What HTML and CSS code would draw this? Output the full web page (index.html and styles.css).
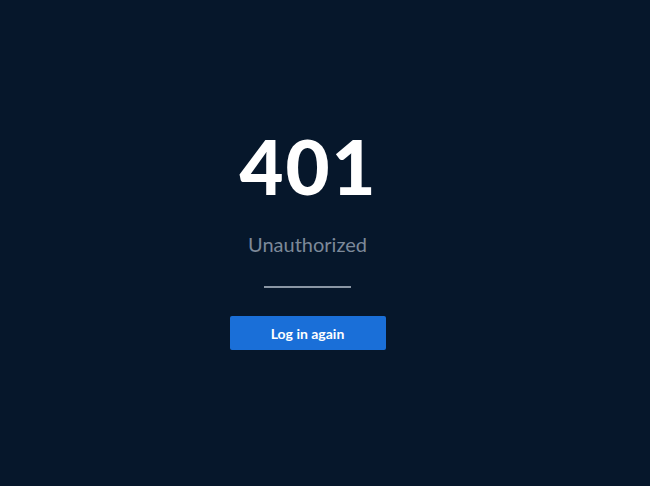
FILE: index.html
```html
<!DOCTYPE html>
<html>
<head>
<meta charset="utf-8">
<link rel="stylesheet" href="styles.css">
</head>
<body>
<main class="page">
  <h1 class="code">401</h1>
  <p class="message">Unauthorized</p>
  <hr class="divider">
  <button class="btn">Log in again</button>
</main>
</body>
</html>
```
FILE: styles.css
```css
html, body {
  margin: 0;
  padding: 0;
  height: 100%;
  background: #06172b;
}
.page {
  height: 100%;
  display: flex;
  flex-direction: column;
  align-items: center;
  font-family: Lato, "Open Sans", sans-serif;
  padding: 126px 35px 0 0;
  box-sizing: border-box;
}
.code {
  margin: 0;
  font-size: 76px;
  line-height: 80px;
  font-weight: 900;
  color: #ffffff;
  letter-spacing: 2px;
  padding-left: 2px;
}
.message {
  margin: 25px 0 0 0;
  font-size: 20px;
  line-height: 26px;
  color: #7d8999;
}
.divider {
  width: 87px;
  height: 2px;
  border: 0;
  background: #8a96a4;
  margin: 29px 0 0 0;
}
.btn {
  margin-top: 28px;
  width: 156px;
  height: 34px;
  border: 0;
  border-radius: 2px;
  background: #1a6fd8;
  color: #ffffff;
  font-family: Lato, "Open Sans", sans-serif;
  font-weight: 700;
  font-size: 14px;
  padding: 0;
}
```
